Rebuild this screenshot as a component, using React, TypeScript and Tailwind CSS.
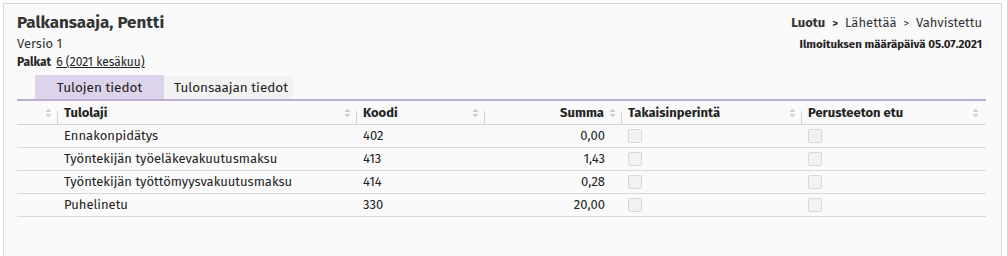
import React from 'react';

type Row = { laji: string; koodi: string; summa: string };

const rows: Row[] = [
  { laji: 'Ennakonpidätys', koodi: '402', summa: '0,00' },
  { laji: 'Työntekijän työeläkevakuutusmaksu', koodi: '413', summa: '1,43' },
  { laji: 'Työntekijän työttömyysvakuutusmaksu', koodi: '414', summa: '0,28' },
  { laji: 'Puhelinetu', koodi: '330', summa: '20,00' },
];

function SortIcon() {
  return (
    <svg width="7" height="10" viewBox="0 0 7 10" className="shrink-0">
      <path d="M3.5 0.5 L6.5 4 L0.5 4 Z" fill="#cfcfcf" />
      <path d="M3.5 9.5 L6.5 6 L0.5 6 Z" fill="#cfcfcf" />
    </svg>
  );
}

function HeadCell({ label, width, right, last }: { label?: string; width: string; right?: boolean; last?: boolean }) {
  return (
    <div className={`${width} relative flex items-center h-full pl-[6px] pr-[6px]`}>
      {right ? (
        <>
          <span className="flex-1 text-right font-bold">{label}</span>
          <span className="ml-[5px]"><SortIcon /></span>
        </>
      ) : (
        <>
          <span className="flex-1 font-bold">{label}</span>
          <SortIcon />
        </>
      )}
      {!last && <span className="absolute right-0 bottom-0 h-[13px] w-px bg-[#d4d4d4]" />}
    </div>
  );
}

function Box() {
  return <span className="block w-[14px] h-[14px] rounded-[2px] border border-[#d8d8d8] bg-[#f2f2f2]" />;
}

export default function App() {
  return (
    <div className="bg-white pt-[3px] pl-[3px] pr-[5px] h-[256px] overflow-hidden" style={{ fontFamily: '"Fira Sans", Lato, "Noto Sans", sans-serif' }}>
      <div className="bg-[#fafafa] border-t border-l border-r border-[#d6d6d6] h-[300px] text-[#222] pl-[13px] pr-[15px]">
        {/* otsikko */}
        <div className="flex justify-between pt-[8px]">
          <div>
            <div className="text-[17px] font-bold text-[#333] leading-[22px]">Palkansaaja, Pentti</div>
            <div className="text-[13px] text-[#333] leading-[16px] mt-[2px]">Versio 1</div>
            <div className="text-[12px] leading-[16px] mt-[2px] text-[#222]">
              <span className="font-bold">Palkat</span>
              <span className="ml-[5px] underline">6 (2021 kesäkuu)</span>
            </div>
          </div>
          <div className="text-right pr-[4px]">
            <div className="text-[13px] leading-[22px] text-[#333]">
              <span className="font-bold">Luotu</span>
              <span className="font-bold mx-[7px] text-[11px]">&gt;</span>
              <span>Lähettää</span>
              <span className="mx-[7px] text-[11px]">&gt;</span>
              <span>Vahvistettu</span>
            </div>
            <div className="text-[11.5px] font-bold leading-[16px] mt-[1px] text-[#222]">Ilmoituksen määräpäivä 05.07.2021</div>
          </div>
        </div>

        {/* välilehdet */}
        <div className="flex items-end pl-[18px] mt-[5px] h-[24px] text-[13.5px]">
          <div className="w-[129px] h-[24px] bg-[#ddd3ea] flex items-center justify-center pt-[3px]">Tulojen tiedot</div>
          <div className="w-[129px] h-[23px] bg-[#f2f2f2] flex items-center pl-[10px] pt-[2px]">Tulonsaajan tiedot</div>
        </div>
        <div className="h-[2px] bg-[#bcaed0]" />

        {/* taulukko */}
        <div className="text-[13px]">
          <div className="flex h-[24px] border-b border-[#d4d4d4]">
            <HeadCell width="w-[41px]" />
            <HeadCell width="w-[299px]" label="Tulolaji" />
            <HeadCell width="w-[128px]" label="Koodi" />
            <HeadCell width="w-[137px]" label="Summa" right />
            <HeadCell width="w-[180px]" label="Takaisinperintä" />
            <HeadCell width="w-[183px]" label="Perusteeton etu" last />
          </div>
          {rows.map((r) => (
            <div key={r.koodi} className="flex items-center h-[23px] border-b border-[#d8d8d8]">
              <div className="w-[41px]" />
              <div className="w-[299px] pl-[6px]">{r.laji}</div>
              <div className="w-[128px] pl-[6px]">{r.koodi}</div>
              <div className="w-[137px] pr-[17px] text-right">{r.summa}</div>
              <div className="w-[180px] pl-[6px]"><Box /></div>
              <div className="w-[183px] pl-[6px]"><Box /></div>
            </div>
          ))}
        </div>
      </div>
    </div>
  );
}
